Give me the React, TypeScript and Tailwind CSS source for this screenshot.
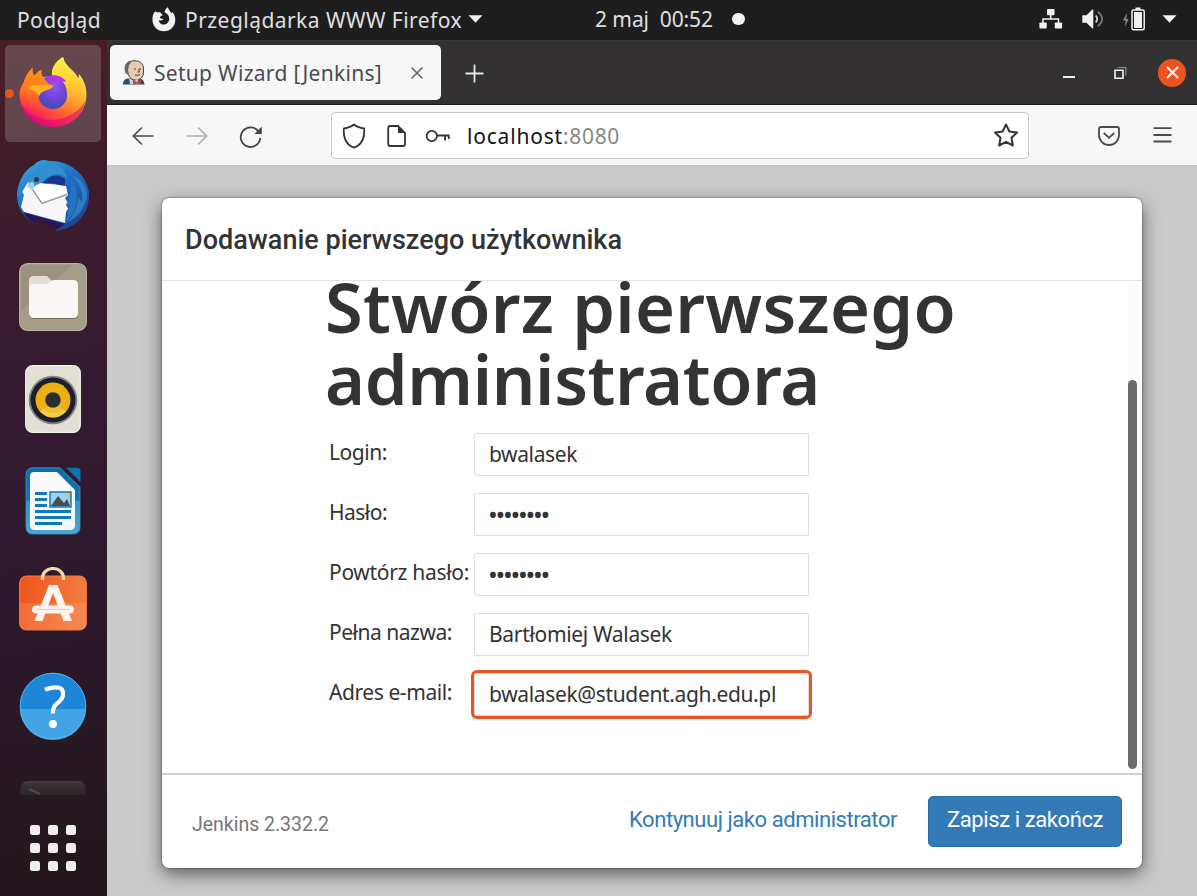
import { useLayoutEffect, useRef } from "react";

/** Text run that is tracked in or out so that it occupies exactly `w` pixels. */
function T({ w, className = "", children }: { w: number; className?: string; children: string }) {
  const ref = useRef<HTMLSpanElement>(null);
  useLayoutEffect(() => {
    const el = ref.current;
    if (!el) return;
    el.style.letterSpacing = "0px";
    const natural = el.getBoundingClientRect().width;
    el.style.letterSpacing = `${(w - natural) / children.length}px`;
  }, [w, children]);
  return (
    <span ref={ref} className={`inline-block shrink-0 whitespace-pre ${className}`}>
      {children}
    </span>
  );
}

const noto = "font-['Noto_Sans',sans-serif]";

function TopBar() {
  return (
    <header className="flex h-[40px] shrink-0 items-center bg-[#1d1d1d] pb-[2px] text-[21px] leading-[38px] text-[#e0e0e0]">
      <div className="flex w-[595px] items-center pl-[17px]">
        <T w={84} className="pt-[2px]">Podgląd</T>
        <svg className="ml-[51px] shrink-0" width="24" height="25" viewBox="0 0 24 25">
          <path
            d="M3.2 4.2 C.9 6.8.3 9.8.5 13 a11.4 11.2 0 0 0 22.8 0 C23.4 9.500 22.100 6.600 20 4.800 L19.600 6.800 C18.600 4.600 17 3.500 15.800.3 C13.600 1.600 12.700 3.700 12.600 5.600 C14.900 6.200 17.400 8.600 17.200 12 C17 15.500 14.600 17.500 11.700 17.500 C8.600 17.500 6.900 15.200 6.900 13.200 C8.500 14 10.200 13.500 11.600 12.100 C10.500 11.500 8.700 11.800 7.800 10.700 C8.200 9 9.800 8.900 11 8 C9.800 7.300 8.800 6.400 8.300 5.300 C7.200 5 6 5.200 5.100 5.500 C4.200 5 3.700 4.500 3.200 4.200Z"
            fill="#f2f2f2"
          />
        </svg>
        <T w={277} className="ml-[9px] pt-[2px]">Przeglądarka WWW Firefox</T>
        <svg className="ml-[6px] shrink-0" width="15" height="8" viewBox="0 0 15 8">
          <path d="M.5.3h14L7.500 7.700z" fill="#f2f2f2" />
        </svg>
      </div>
      <T w={118}>2 maj  00:52</T>
      <span className="ml-[19px] size-[12.500px] rounded-full bg-[#f2f2f2]" />
      <div className="ml-auto flex items-center pr-[20px]">
        <svg width="24" height="20" viewBox="0 0 24 20" fill="#f2f2f2">
          <rect x="8" y="0" width="7.500" height="6.300" rx=".8" />
          <rect x=".4" y="13.400" width="7.300" height="6.200" rx=".8" />
          <rect x="15.800" y="13.400" width="7.300" height="6.200" rx=".8" />
          <path d="M11.700 6v4M4 14v-4h15.500v4" fill="none" stroke="#f2f2f2" strokeWidth="1.500" />
        </svg>
        <svg className="ml-[19px]" width="23" height="20" viewBox="0 0 23 20">
          <path d="M.3 6.300h4.200L10.300.4h1v19.200h-1L4.500 13.700H.3z" fill="#f2f2f2" />
          <path d="M13.700 6.500q3 3.500 0 7" fill="none" stroke="#cfcfcf" strokeWidth="1.800" />
          <path d="M16 2.800q8.300 7.200 0 14.400" fill="none" stroke="#777" strokeWidth="1.800" />
        </svg>
        <svg className="ml-[18px]" width="23" height="24" viewBox="0 0 23 24">
          <path d="M4 6 0 13.500h2.700l-1 6.500L5.600 12H3.200z" fill="#888" />
          <rect x="9" y="3" width="12.200" height="19.800" rx="1.500" fill="none" stroke="#f2f2f2" strokeWidth="1.500" />
          <path d="M12.500.5h5V3h-5zM11 5h8v16h-8z" fill="#f2f2f2" />
        </svg>
        <svg className="ml-[16px]" width="15" height="8" viewBox="0 0 15 8">
          <path d="M.5.3h14L7.500 7.700z" fill="#f2f2f2" />
        </svg>
      </div>
    </header>
  );
}

function FirefoxIcon() {
  return (
    <svg width="68" height="71" viewBox="0 0 68 71">
      <defs>
        <linearGradient id="ffBody" x1=".8" y1=".1" x2=".25" y2="1">
          <stop offset="0" stopColor="#fff44f" />
          <stop offset=".3" stopColor="#ffbd30" />
          <stop offset=".55" stopColor="#ff7a2c" />
          <stop offset=".78" stopColor="#ff3b45" />
          <stop offset="1" stopColor="#e20083" />
        </linearGradient>
        <linearGradient id="ffTail" x1=".5" y1="0" x2=".5" y2="1">
          <stop offset="0" stopColor="#fff24b" />
          <stop offset=".45" stopColor="#ffd034" />
          <stop offset="1" stopColor="#ff8a2a" stopOpacity="0" />
        </linearGradient>
        <radialGradient id="ffGlobe" cx=".55" cy=".3" r=".7">
          <stop offset="0" stopColor="#9059f5" />
          <stop offset=".5" stopColor="#7546db" />
          <stop offset="1" stopColor="#444bb2" />
        </radialGradient>
        <linearGradient id="ffLeft" x1=".5" y1="0" x2=".4" y2="1">
          <stop offset="0" stopColor="#ff980e" />
          <stop offset=".5" stopColor="#ff7620" />
          <stop offset="1" stopColor="#ff4a3c" stopOpacity="0" />
        </linearGradient>
      </defs>
      <path
        d="M44 0C37 4 32 11 33 19L24 20C22 18 22 16 22.500 13C19 14 17 17 15.500 19C13.500 16 13 14 13.500 11C9 15 6 20 5 25C2 29 .5 34 .5 38C1 56 15 70 34 70C53 70 67 56 67.500 38C68 29 63 20 60 17L59.500 22C56 13 46 10 44 0Z"
        fill="url(#ffBody)"
      />
      <path d="M44 0C37 4 32 11 33 19C43 21 49 28 49 38C49 49 42 54 34 54C45 60 60 52 62 38C64 29 61 22 57 18C55 13 46 10 44 0Z" fill="url(#ffTail)" />
      <path d="M2 47C10 61 28 66 44 61C54 58 63 51 66 44C64 59 51 70 34 70C18 70 5 60 2 47Z" fill="#d9007e" opacity=".5" />
      <path d="M29 19C38 17 44 21 47 24L43 24C47 28 48 33 48 38C48 46 42 52 34 52C25 52 19 45 19 37C19 29 23 21 29 19Z" fill="url(#ffGlobe)" />
      <path d="M27 20C37 16 44 20 47 25L41 24C43 27 40 25 36 25C34 24 31 24 27 20Z" fill="#b833e1" />
      <path
        d="M.5 38C.5 34 2 29 5 25C6 20 9 15 13.500 11C13 14 13.500 16 15.500 19C17 17 19 14 22.500 13C22 16 22 18 24 20C27 23 28 27 34 28.500C34 31 30 31.500 27 33C22 35 19 37 20 45C21 50 24 54 30 56C17 57 3 53 .5 38Z"
        fill="url(#ffLeft)"
      />
      <path d="M9 31C13 27 19 28.500 24 28C27 27.500 30 29 33.500 28.500C34.500 31 30 32 27 33.500C22 35 21 37 20.500 39C17 34 13 33 9 31Z" fill="#ffb428" />
    </svg>
  );
}

function ThunderbirdIcon() {
  return (
    <svg width="74" height="74" viewBox="0 0 74 74">
      <defs>
        <linearGradient id="tbBody" x1=".2" y1="0" x2=".8" y2="1">
          <stop offset="0" stopColor="#35a3dd" />
          <stop offset=".4" stopColor="#1f6fc9" />
          <stop offset="1" stopColor="#1c3f92" />
        </linearGradient>
      </defs>
      <path
        d="M18 6C22 1 28 0 33 2C52 1 70 14 73 33C74 54 61 70 39 72L49 65L14 57L20 66C7 59 0 47 1 33C3 21 9 10 18 6Z"
        fill="url(#tbBody)"
      />
      <path d="M34 24Q44 25 49 28L49 20Q42 14 34 18Q27 22 25 26Z" fill="#17358f" />
      <path d="M5 48L8 36L6 33L12 23L34 25L50 27L52 36L49 39L52 44L50 46L53 51L50 53L49 64L8 53Z" fill="#f7f7f9" />
      <path d="M12 24L26 44.500L51 35.500" fill="none" stroke="#9b9da3" strokeWidth="1.400" />
      <path d="M13.500 23.500L26 42.500L50 34L50 28Q40 25 29 25Z" fill="#fff" />
      <path d="M13 22C16 15 19 8 31 3C40 3 48 9 52 20C44 12 35 15 31 19C26 25 21 24 16 30L13 28Z" fill="#318fd1" />
      <path d="M12 25L16 22.500C19 24 19 28 16 31C13 29 11 28 12 25Z" fill="#9bd6dc" />
      <circle cx="20.500" cy="20.500" r="2.600" fill="#293c4a" />
      <path d="M52 17C65 28 64 51 49 65L52 55L50 53L54 46L50 46L53 39C57 31 55 23 52 17Z" fill="#2773be" />
      <path d="M57 17C66 28 67 34 66 43L62 38C62 49 57 57 51 64C62 58 70 49 71 35C70 27 66 21 57 17Z" fill="#3593cb" opacity=".65" />
      <path d="M7 53L48 65L39 71L26 62L18 60L20 66Q11 61 7 53Z" fill="#2b1653" />
    </svg>
  );
}

function FilesIcon() {
  return (
    <svg width="68" height="68" viewBox="0 0 68 68">
      <rect x=".7" y=".7" width="66.600" height="66.600" rx="8" fill="#9b937e" stroke="#bcb5a0" strokeWidth="1.300" />
      <path d="M2 48 53 2h6q7 0 7 7v50q0 7-7 7H9q-7 0-7-7z" fill="#aaa28e" opacity=".75" />
      <path d="M10 18q0-5 5-5h13l5 5v8H10z" fill="#e4dfd2" />
      <path d="M10 26q0-4 4-4h15l5-4h20q5 0 5 5v28q0 5-5 5H15q-5 0-5-5z" fill="#777060" />
      <path d="M10 25q0-4 4-4h15l5-4h20q5 0 5 5v28q0 5-5 5H15q-5 0-5-5z" fill="#f9f8f6" />
    </svg>
  );
}

function RhythmboxIcon() {
  return (
    <svg width="56" height="68" viewBox="0 0 56 68">
      <rect x=".7" y=".7" width="54.600" height="66.600" rx="7" fill="#e3dfd4" stroke="#f6f4ee" strokeWidth="1.200" />
      <circle cx="28" cy="35" r="24.300" fill="#7f8183" />
      <circle cx="28" cy="35" r="22.500" fill="#1b1d2a" />
      <circle cx="28" cy="35" r="17.500" fill="#edae12" />
      <path d="M28 35 15 47q13 11 26 0z" fill="#f7d760" opacity=".75" />
      <circle cx="28" cy="35" r="13" fill="#edb31d" opacity=".6" />
      <circle cx="28" cy="35" r="7.700" fill="#2b2d2e" />
    </svg>
  );
}

function WriterIcon() {
  return (
    <svg width="56" height="68" viewBox="0 0 56 68">
      <defs>
        <linearGradient id="wr" x1="0" y1="0" x2="0" y2="1">
          <stop offset="0" stopColor="#0d6ca8" />
          <stop offset=".49" stopColor="#1276ae" />
          <stop offset=".5" stopColor="#2f93c7" />
          <stop offset="1" stopColor="#4aa8d8" />
        </linearGradient>
      </defs>
      <path d="M8 .8h27L55 20v40q0 7-7 7H8q-7 0-7-7V8Q1 .8 8 .8z" fill="url(#wr)" stroke="#399ac9" strokeWidth=".8" />
      <path d="M41 .8h11q3.500 0 3.500 3.500V15z" fill="#0875af" />
      <path d="M9 5h23L50 23v35q0 5-5 5H10q-5 0-5-5V9q0-4 4-4z" fill="#f9f9f9" />
      <path d="M10 26.500h12M10 32.500h12M10 38.500h12M10 44.500h36M10 50.500h36M10 56.500h27" stroke="#1179b9" strokeWidth="2.800" />
      <path d="M25 25h21v15H25z" fill="#9bd1f3" stroke="#1277b4" strokeWidth="1.500" />
      <path d="M40 26h5v4q-5 0-5-4z" fill="#f1c232" />
      <path d="m26 39 7-10 6 7 3-4 3 7z" fill="#4b4d4d" />
    </svg>
  );
}

function SoftwareIcon() {
  return (
    <svg width="68" height="64" viewBox="0 0 68 64">
      <defs>
        <linearGradient id="sw" x1="0" y1="0" x2="1" y2="0">
          <stop offset="0" stopColor="#ef541e" />
          <stop offset="1" stopColor="#f07d40" />
        </linearGradient>
      </defs>
      <rect x=".7" y="9" width="66.600" height="54" rx="7" fill="url(#sw)" stroke="#ff7844" strokeWidth="1.200" />
      <path d="M1.300 36h65.400v20q0 6-6 6H7.500q-6 0-6-6z" fill="#ffad82" opacity=".28" />
      <path d="M23.500 13V11a10.500 9.500 0 0 1 21 0v2" fill="none" stroke="#f5d9a4" strokeWidth="3.200" />
      <path d="M30 18h8.500L53 54h-8.500L34 26 23.500 54H15.500z" fill="#fff4ed" />
      <rect x="13" y="38.500" width="42" height="8" rx="4" fill="#fff4ed" />
      <path d="M18 42.500h33" stroke="#f6c8b3" strokeWidth="1.200" />
    </svg>
  );
}

function HelpIcon() {
  return (
    <svg width="68" height="68" viewBox="0 0 68 68">
      <circle cx="34" cy="34" r="33" fill="#1e86d9" />
      <path d="M1 37h66a33 31 0 0 1-66 0z" fill="#42a3e5" />
      <circle cx="34" cy="34" r="32.800" fill="none" stroke="#55b5ef" />
      <path d="M26 17.500q19-6 18 5c0 9-11 7-10 19" fill="none" stroke="#fff" strokeWidth="4.200" />
      <circle cx="34" cy="52" r="4" fill="#fff" />
    </svg>
  );
}

function Dock() {
  return (
    <aside className="flex w-[107px] shrink-0 flex-col items-center bg-[linear-gradient(170deg,#471e24_0%,#3c1b2b_20%,#351a30_40%,#2c182c_65%,#25171f_90%,#21161b_100%)] pr-px">
      <div className="relative mt-[5px] flex h-[97px] w-[96px] items-center justify-center rounded-[5px] bg-white/18 pb-[2px]">
        <FirefoxIcon />
        <span className="absolute left-0 top-[44px] size-[9px] rounded-full bg-[#e95420]" />
      </div>
      <div className="mt-[17px]"><ThunderbirdIcon /></div>
      <div className="mt-[30px]"><FilesIcon /></div>
      <div className="mt-[34px]"><RhythmboxIcon /></div>
      <div className="mt-[34px]"><WriterIcon /></div>
      <div className="mt-[32px]"><SoftwareIcon /></div>
      <div className="mt-[41px]"><HelpIcon /></div>
      <svg className="mt-[41px] shrink-0" width="66" height="14" viewBox="0 0 66 14">
        <defs>
          <linearGradient id="term" x1="0" y1="0" x2="0" y2="1">
            <stop offset="0" stopColor="#3a3538" />
            <stop offset="1" stopColor="#2c2529" />
          </linearGradient>
        </defs>
        <path d="M.5 14V8Q.5.7 8 .7h50q7.500 0 7.500 7.300v6" fill="url(#term)" />
        <path d="M4 1.500Q6 .7 8 .7h50q2 0 4 .8" fill="none" stroke="#4a4548" />
        <path d="m9 8 11 5" stroke="#4d474b" strokeWidth="2" />
      </svg>
      <div className="mt-[30px] grid grid-cols-3 gap-[8px]">
        {Array.from({ length: 9 }, (_, i) => (
          <span key={i} className="size-[10px] rounded-[2.500px] bg-[#efeeec]" />
        ))}
      </div>
    </aside>
  );
}

function TabStrip() {
  return (
    <div className="flex h-[65px] shrink-0 items-start border-t border-[#3a3839] bg-[#323031] shadow-[inset_0_-1px_0_#1c1b1c]">
      <div className="ml-[3px] mt-[4px] flex h-[55px] w-[331px] items-center rounded-[5px] bg-[#f7f7f7] pl-[12px] text-[21px] text-[#4a4a4f]">
        <svg className="shrink-0" width="24" height="25" viewBox="0 0 24 25">
          <path d="M1 24.500c0-4 2-5.500 5-6l9-1c4 1 7 2 7.500 7z" fill="#2d4d63" />
          <path d="M4 11C2 5 5 1 12 .8c7-.3 10 4 9.500 9.200.5 6-2 9.500-7 10.200-4 0-7-2-8-5.500C4.500 14 4 12 4 11z" fill="#e6cdb2" stroke="#4c3e37" strokeWidth="1" />
          <path d="M3.500 13C1 6 4 1.500 10 1L7 5l-1 5 1 4z" fill="#6a6764" />
          <path d="M7 18l5 3 4-2v5H8z" fill="#cfd4d8" />
          <path d="m11 20 4 2 4-3v5.500l-4-1-4 1z" fill="#d33833" />
          <path d="M12 9h2m3 0h2M13 15q3 1 5-.5M16.500 9l1 3h-2" fill="none" stroke="#4c3e37" />
        </svg>
        <T w={228} className="ml-[8px] pt-[2px]">Setup Wizard [Jenkins]</T>
        <svg className="ml-[28px] shrink-0" width="14" height="14" viewBox="0 0 14 14">
          <path d="m1.500 1.500 11 11m0-11-11 11" stroke="#626262" strokeWidth="1.500" />
        </svg>
      </div>
      <svg className="ml-[24px] mt-[23px]" width="19" height="19" viewBox="0 0 19 19">
        <path d="M9.500.5v18M.5 9.500h18" stroke="#e8e8e8" strokeWidth="1.800" />
      </svg>
      <div className="ml-auto mt-[17px] flex h-[29px] items-center pr-[11px]">
        <span className="mt-[8px] h-[2px] w-[12px] bg-[#eee]" />
        <svg className="ml-[39px]" width="13" height="14" viewBox="0 0 13 14">
          <path d="M3.500 1.500h8.300v8" fill="none" stroke="#8f8f8f" strokeWidth="1.200" />
          <path d="M1 4.200h8v8H1z" fill="none" stroke="#f2f2f2" strokeWidth="1.600" />
        </svg>
        <span className="ml-[31px] flex size-[28px] items-center justify-center rounded-full bg-[#e95420]">
          <svg width="13" height="13" viewBox="0 0 13 13">
            <path d="m1 1 11 11M12 1 1 12" stroke="#fff" strokeWidth="2" />
          </svg>
        </span>
      </div>
    </div>
  );
}

function NavBar() {
  return (
    <div className="flex h-[61px] shrink-0 items-center border-b border-[#c4c4c4] bg-[#f7f7f7] pt-px">
      <svg className="ml-[25px] mt-px shrink-0" width="22" height="20" viewBox="0 0 22 20">
        <path d="M21.500 10H1M10 1.500 1.300 10l8.700 8.500" fill="none" stroke="#4a4a4a" strokeWidth="1.700" />
      </svg>
      <svg className="ml-[32px] mt-px shrink-0" width="22" height="20" viewBox="0 0 22 20">
        <path d="M.5 10H21M12 1.500 20.700 10 12 18.500" fill="none" stroke="#b0b0b0" strokeWidth="1.700" />
      </svg>
      <svg className="ml-[31px] mt-[2px] shrink-0" width="24" height="24" viewBox="0 0 24 24">
        <path d="M20 7.200A9.800 9.800 0 1 0 21.300 13" fill="none" stroke="#444" strokeWidth="1.800" />
        <path d="M22.800 1.500V9h-7.500z" fill="#444" />
      </svg>
      <div className="ml-[68px] flex h-[47px] w-[698px] shrink-0 items-center rounded-[4px] border-[1.500px] border-[#c9c9c9] bg-white pl-[10px] text-[21px]">
        <svg className="shrink-0" width="24" height="26" viewBox="0 0 24 26">
          <path d="M12 1.500C9 4 6 4.800 1.800 5.500 1.300 15 4.500 22 12 24.600 19.500 22 22.700 15 22.200 5.500 18 4.800 15 4 12 1.500z" fill="none" stroke="#333" strokeWidth="1.800" strokeLinejoin="round" />
        </svg>
        <svg className="ml-[21px] shrink-0" width="19" height="22" viewBox="0 0 19 22">
          <path d="M1.200 3q0-2 2-2H11l7 7v11q0 2-2 2H3.200q-2 0-2-2z" fill="none" stroke="#333" strokeWidth="1.800" />
          <path d="M11 1v7h7z" fill="#333" />
        </svg>
        <svg className="ml-[19px] shrink-0" width="26" height="14" viewBox="0 0 26 14">
          <circle cx="6.800" cy="7" r="5.200" fill="none" stroke="#333" strokeWidth="1.800" />
          <path d="M12 6.500h12.500M23.800 6.500V10M20 6.500v5" fill="none" stroke="#333" strokeWidth="1.800" />
        </svg>
        <T w={96} className="ml-[16px] pt-[3px] text-[#15141a]">localhost</T>
        <T w={57} className="pt-[3px] text-[#888]">:8080</T>
        <svg className="ml-auto mr-[9px] shrink-0" width="26" height="25" viewBox="0 0 26 25">
          <path d="M13 1.500l3.400 7 7.600 1.100-5.500 5.200 1.300 7.700L13 18.900l-6.800 3.600 1.300-7.700L2 9.600l7.600-1.100z" fill="none" stroke="#333" strokeWidth="2" strokeLinejoin="round" />
        </svg>
      </div>
      <svg className="ml-[69px] shrink-0" width="22" height="20" viewBox="0 0 22 20">
        <path d="M3 1h16q2 0 2 2v6a10 10 0 0 1-20 0V3q0-2 2-2z" fill="none" stroke="#4a4a4a" strokeWidth="1.800" />
        <path d="m5.800 7 5.200 4.800L16.200 7" fill="none" stroke="#4a4a4a" strokeWidth="1.800" />
      </svg>
      <svg className="-mt-px ml-[33px] shrink-0" width="19" height="16" viewBox="0 0 19 16">
        <path d="M.5 1.200h18M.5 8h18M.5 14.500h18" stroke="#4a4a4a" strokeWidth="1.800" />
      </svg>
    </div>
  );
}

const fields = [
  { label: "Login:", lw: 58, value: "bwalasek", vw: 88 },
  { label: "Hasło:", lw: 58, value: "••••••••", vw: 60, secret: true },
  { label: "Powtórz hasło:", lw: 140, value: "••••••••", vw: 60, secret: true },
  { label: "Pełna nazwa:", lw: 123, value: "Bartłomiej Walasek", vw: 183 },
  { label: "Adres e-mail:", lw: 123, value: "bwalasek@student.agh.edu.pl", vw: 287, focused: true },
];

function SetupDialog() {
  return (
    <section className="flex h-[670px] w-[980px] flex-col overflow-hidden rounded-[7px] bg-white text-[#333] shadow-[0_6px_18px_rgba(0,0,0,0.55),0_0_2px_rgba(0,0,0,0.6)]">
      <div className="flex h-[83px] shrink-0 items-center border-b border-[#e3e3e3] pl-[23px] pt-[3px] font-['Roboto',sans-serif] text-[27px] font-medium">
        <T w={437}>Dodawanie pierwszego użytkownika</T>
      </div>
      <div className="flex h-[492px] shrink-0 overflow-hidden">
        <div className="flex-1 pl-[162px]">
          <h1 className="-mt-[10px] ml-px flex flex-col items-start text-[68.500px] font-semibold leading-[72px]">
            <T w={631}>Stwórz pierwszego</T>
            <T w={495}>administratora</T>
          </h1>
          <form className="mt-[18px] flex flex-col gap-[17px] text-[21px]">
            {fields.map((f) => (
              <div key={f.label} className="flex h-[43px]">
                <label className="w-[150px] shrink-0 pl-[5px] leading-[38px]">
                  <T w={f.lw}>{f.label}</T>
                </label>
                <div
                  className={`flex h-[43px] w-[335px] items-center border-[1.500px] border-[#ddd] bg-white ${
                    f.focused ? "rounded-[3px] outline-[3px] outline-[#e95420]" : "rounded-[2px]"
                  } ${f.secret ? "pl-[13px]" : "pl-[14px]"}`}
                >
                  <T w={f.vw} className={f.secret ? "text-[26px] leading-[41px]" : "leading-[43px]"}>{f.value}</T>
                </div>
              </div>
            ))}
          </form>
        </div>
        <div className="flex w-[14px] flex-col bg-[#fcfcfc] pt-[99px]">
          <div className="h-[389px] w-[9px] rounded-full bg-[#6c6c6c]" />
        </div>
      </div>
      <footer className="flex h-[95px] shrink-0 items-center border-t-2 border-[#d0d0d0] pl-[30px] pr-[20px] font-['Roboto',sans-serif]">
        <T w={137} className="pt-[6px] text-[19.500px] text-[#777]">Jenkins 2.332.2</T>
        <T w={268} className="ml-auto pb-[4px] text-[22px] text-[#337ab7]">Kontynuuj jako administrator</T>
        <button className="ml-[31px] flex h-[51px] w-[194px] items-center rounded-[5px] border border-[#2e6da4] bg-[#337ab7] pb-[4px] pl-[18px] text-[22px] text-white">
          <T w={156}>Zapisz i zakończ</T>
        </button>
      </footer>
    </section>
  );
}

export default function App() {
  return (
    <div className={`flex h-[896px] w-[1197px] flex-col overflow-hidden ${noto}`}>
      <TopBar />
      <div className="flex min-h-0 flex-1">
        <Dock />
        <main className="flex min-w-0 flex-1 flex-col">
          <TabStrip />
          <NavBar />
          <div className="flex-1 bg-[#cbcbcb] pl-[55px] pt-[32px]">
            <SetupDialog />
          </div>
        </main>
      </div>
    </div>
  );
}
